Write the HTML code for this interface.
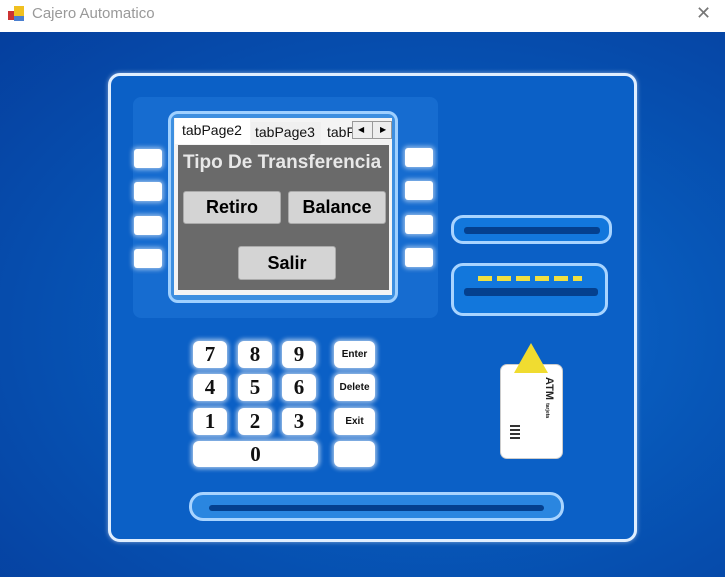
<!DOCTYPE html><html><head><style>
*{margin:0;padding:0;box-sizing:border-box}
body{width:725px;height:577px;overflow:hidden;background:#fff;font-family:"Liberation Sans",sans-serif;position:relative}
.a{position:absolute}
#bg{left:0;top:32px;width:725px;height:545px;background:radial-gradient(ellipse at 60% 55%,#0f6ad0 0%,#0757b8 45%,#053f9e 100%)}
.k{position:absolute;background:#fff;border-radius:6px;box-shadow:0 0 4px 2px rgba(255,255,255,.6);font-family:"Liberation Serif",serif;font-weight:bold;font-size:21px;text-align:center;line-height:27px;color:#111}
.f{position:absolute;background:#fff;border-radius:6px;box-shadow:0 0 4px 2px rgba(255,255,255,.6);font-weight:bold;font-size:10px;text-align:center;line-height:27px;color:#111}
.sb{position:absolute;width:28px;height:19px;background:#fff;border-radius:3px;box-shadow:0 0 4px 2px rgba(255,255,255,.5)}
.btn{position:absolute;background:#d4d4d4;border-radius:3px;font-weight:bold;font-size:18px;text-align:center;color:#000;border:1px solid #aaa}
</style></head><body>
<div class="a" style="left:8px;top:6px;width:16px;height:16px">
<div class="a" style="left:0;top:5px;width:6px;height:9px;background:#c33"></div>
<div class="a" style="left:6px;top:0;width:10px;height:10px;background:#f0c020"></div>
<div class="a" style="left:6px;top:10px;width:10px;height:5px;background:#4a7fd0"></div></div>
<div class="a" style="left:32px;top:5px;font-size:15px;color:#999">Cajero Automatico</div>
<div class="a" style="left:696px;top:3px;font-size:18px;color:#777;font-weight:300">✕</div>
<div id="bg" class="a"></div>
<div class="a" style="left:108px;top:73px;width:529px;height:469px;border:3px solid #dfeeff;border-radius:12px;background:#0b60c6;box-shadow:0 0 5px rgba(255,255,255,.5)"></div>
<div class="a" style="left:133px;top:97px;width:305px;height:221px;background:#166cd0;border-radius:8px"></div>
<div class="a" style="left:168px;top:111px;width:230px;height:192px;border:3px solid #9fd0ff;border-radius:10px;background:#3d8fe0"></div>
<div class="sb" style="left:134px;top:149px"></div><div class="sb" style="left:134px;top:182px"></div><div class="sb" style="left:134px;top:216px"></div><div class="sb" style="left:134px;top:249px"></div>
<div class="sb" style="left:405px;top:148px"></div><div class="sb" style="left:405px;top:181px"></div><div class="sb" style="left:405px;top:215px"></div><div class="sb" style="left:405px;top:248px"></div>
<div class="a" style="left:174px;top:118px;width:218px;height:177px;background:#f4f4f4"></div>
<div class="a" style="left:175px;top:118px;width:75px;height:26px;background:#fff;font-size:14px;padding:4px 0 0 7px;color:#111">tabPage2</div>
<div class="a" style="left:251px;top:122px;width:70px;height:22px;background:#f0f0f0;font-size:14px;padding:2px 0 0 4px;color:#111">tabPage3</div>
<div class="a" style="left:322px;top:122px;width:30px;height:22px;overflow:hidden;font-size:14px;padding:2px 0 0 5px;color:#111">tabPage4</div>
<div class="a" style="left:352px;top:121px;width:40px;height:18px;border:1px solid #999;background:#eee;font-size:8px;line-height:16px"><span style="position:absolute;left:5px">◀</span><span style="position:absolute;left:19px;top:0;height:16px;border-left:1px solid #999;padding-left:7px">▶</span></div>
<div class="a" style="left:178px;top:145px;width:211px;height:145px;background:#6a6a6a;overflow:hidden">
<div class="a" style="left:5px;top:7px;font-size:19px;font-weight:bold;color:#e8e8e8;white-space:nowrap">Tipo De Transferencia</div>
<div class="btn" style="left:5px;top:46px;width:98px;height:33px;line-height:31px">Retiro</div>
<div class="btn" style="left:110px;top:46px;width:98px;height:33px;line-height:31px">Balance</div>
<div class="btn" style="left:60px;top:101px;width:98px;height:34px;line-height:32px">Salir</div>
</div>
<div class="a" style="left:451px;top:215px;width:161px;height:29px;border:3px solid #a8d4ff;border-radius:12px;background:#1277dc"><div class="a" style="left:10px;top:9px;width:136px;height:7px;background:#04408e;border-radius:3px"></div></div>
<div class="a" style="left:451px;top:263px;width:157px;height:53px;border:3px solid #a8d4ff;border-radius:12px;background:#1277dc">
<div class="a" style="left:24px;top:10px;width:104px;height:5px;background:repeating-linear-gradient(90deg,#f0e040 0 14px,transparent 14px 19px)"></div>
<div class="a" style="left:10px;top:22px;width:134px;height:8px;background:#04408e;border-radius:3px"></div></div>
<div class="k" style="left:193px;top:341px;width:34px;height:27px">7</div>
<div class="k" style="left:238px;top:341px;width:34px;height:27px">8</div>
<div class="k" style="left:282px;top:341px;width:34px;height:27px">9</div>
<div class="k" style="left:193px;top:374px;width:34px;height:27px">4</div>
<div class="k" style="left:238px;top:374px;width:34px;height:27px">5</div>
<div class="k" style="left:282px;top:374px;width:34px;height:27px">6</div>
<div class="k" style="left:193px;top:408px;width:34px;height:27px">1</div>
<div class="k" style="left:238px;top:408px;width:34px;height:27px">2</div>
<div class="k" style="left:282px;top:408px;width:34px;height:27px">3</div>
<div class="k" style="left:193px;top:441px;width:125px;height:26px">0</div>
<div class="f" style="left:334px;top:341px;width:41px;height:27px">Enter</div>
<div class="f" style="left:334px;top:374px;width:41px;height:27px">Delete</div>
<div class="f" style="left:334px;top:408px;width:41px;height:27px">Exit</div>
<div class="f" style="left:334px;top:441px;width:41px;height:26px"></div>
<div class="a" style="left:500px;top:364px;width:63px;height:95px;background:#fff;border-radius:7px;border:1px solid #ccc"></div>
<div class="a" style="left:514px;top:343px;width:0;height:0;border-left:17px solid transparent;border-right:17px solid transparent;border-bottom:30px solid #f0dc30"></div>
<div class="a" style="top:377px;font-size:11px;font-weight:bold;color:#222;transform:rotate(90deg);transform-origin:left top;left:555px;white-space:nowrap">ATM <span style="font-size:5px">tarjeta</span></div>
<div class="a" style="left:510px;top:425px;width:10px;height:14px;background:repeating-linear-gradient(0deg,#333 0 2px,#fff 2px 4px)"></div>
<div class="a" style="left:189px;top:492px;width:375px;height:29px;border:3px solid #a8d4ff;border-radius:14px;background:#2a86e0"><div class="a" style="left:17px;top:10px;width:335px;height:6px;background:#04408e;border-radius:3px"></div></div>
</body></html>
